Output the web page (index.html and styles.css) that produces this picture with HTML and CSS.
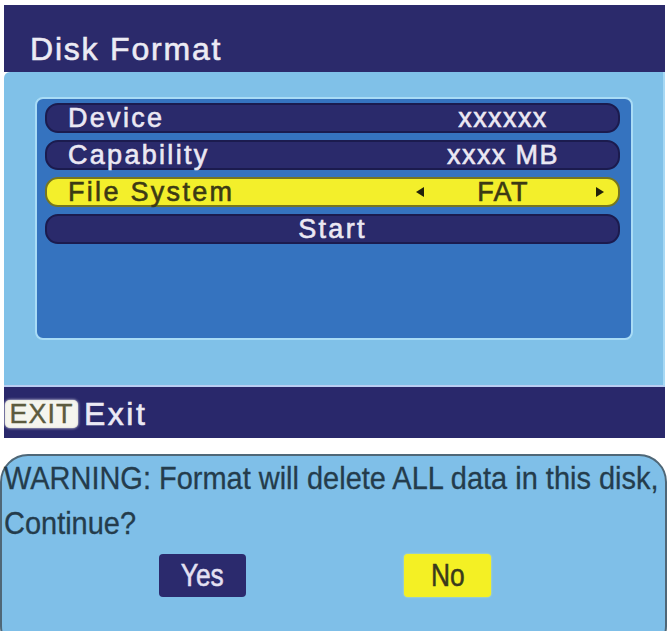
FILE: index.html
```html
<!DOCTYPE html>
<html>
<head>
<meta charset="utf-8">
<link rel="stylesheet" href="styles.css">
</head>
<body>
<div class="screen">
  <div class="header"><span class="title">Disk Format</span></div>
  <div class="body">
    <div class="panel">
      <div class="row">
        <span class="label">Device</span>
        <span class="value"><span></span><span class="val">xxxxxx</span><span></span></span>
      </div>
      <div class="row">
        <span class="label">Capability</span>
        <span class="value"><span></span><span class="val">xxxx MB</span><span></span></span>
      </div>
      <div class="row sel">
        <span class="label">File System</span>
        <span class="value">
          <svg class="arrow" viewBox="0 0 8 10" width="8" height="10"><polygon points="8,0 8,10 0,5"/></svg>
          <span class="val">FAT</span>
          <svg class="arrow" viewBox="0 0 8 10" width="8" height="10"><polygon points="0,0 0,10 8,5"/></svg>
        </span>
      </div>
      <div class="row center"><span class="label">Start</span></div>
    </div>
  </div>
  <div class="footer">
    <span class="exit-key">EXIT</span>
    <span class="exit-label">Exit</span>
  </div>
</div>
<div class="dialog">
  <p class="warn">WARNING: Format will delete ALL data in this disk,</p>
  <p class="warn second">Continue?</p>
  <div class="buttons">
    <span class="btn yes"><span class="btn-text">Yes</span></span>
    <span class="btn no"><span class="btn-text">No</span></span>
  </div>
</div>
</body>
</html>
```

FILE: styles.css
```css
* { box-sizing: border-box; }
html, body { margin: 0; padding: 0; }
body {
  background: #ffffff;
  font-family: "Liberation Sans", Arial, sans-serif;
  width: 667px;
  height: 631px;
  overflow: hidden;
}
.screen {
  margin: 5px 2px 0 4px;
}
.header {
  height: 67px;
  background: #2b2a6b;
  padding: 28px 0 0 26px;
}
.title {
  display: block;
  font-size: 32px;
  line-height: 32px;
  letter-spacing: 1.8px;
  color: #ecebf4;
  -webkit-text-stroke: 0.6px #ecebf4;
}
.body {
  height: 315px;
  background: #80c1e8;
  border-top-left-radius: 6px;
  border-bottom: 2px solid #b9cdf2;
  border-right: 2px solid #a6d8f4;
  padding: 25px 30px 0 31px;
}
.panel {
  height: 243px;
  background: #3573bf;
  border: 2px solid #a9dcf6;
  border-radius: 8px;
  padding: 4px 11px 0 8px;
  display: flex;
  flex-direction: column;
  gap: 7px;
}
.row {
  height: 30px;
  background: #2a2a6b;
  border: 2px solid #1b1b4e;
  border-radius: 13px;
  display: grid;
  grid-template-columns: 1fr 190px;
  padding: 0 13px 0 21px;
  color: #ebe8f3;
  font-size: 27px;
  line-height: 26px;
}
.label {
  letter-spacing: 2.3px;
  -webkit-text-stroke: 0.6px currentColor;
  white-space: nowrap;
}
.value {
  display: grid;
  grid-template-columns: 10px 1fr 10px;
  align-items: center;
  justify-items: center;
}
.val {
  margin-right: 14px;
  letter-spacing: 1.4px;
  -webkit-text-stroke: 0.6px currentColor;
  white-space: nowrap;
}
.row.sel {
  background: #f3ef2b;
  border-color: #77761f;
  color: #3c3a14;
}
.arrow { fill: #22220a; }
.row.center {
  grid-template-columns: 1fr;
  justify-items: center;
  padding: 0;
}
.footer {
  height: 51px;
  background: #29286b;
  display: flex;
  align-items: center;
  padding: 2px 0 0 1px;
}
.exit-key {
  width: 73px;
  height: 28px;
  background: #f5f5ee;
  border-radius: 5px;
  box-shadow: 0 0 3px #ffffff, inset 0 0 2px #d8d8c8;
  color: #5c5b3e;
  font-size: 27px;
  line-height: 28px;
  letter-spacing: 1px;
  text-align: center;
  -webkit-text-stroke: 0.4px #5c5b3e;
}
.exit-label {
  margin-left: 6px;
  color: #ebe9f5;
  font-size: 32px;
  line-height: 32px;
  letter-spacing: 2.5px;
  -webkit-text-stroke: 0.6px #ebe9f5;
}
.dialog {
  margin-top: 16px;
  height: 200px;
  background: #7fbfe8;
  border: 2px solid #4f6777;
  border-radius: 28px;
  padding: 5px 0 0 2px;
}
.warn {
  margin: 0;
  font-size: 32px;
  line-height: 34px;
  color: #243c4c;
  white-space: nowrap;
  transform: scaleX(0.905);
  transform-origin: left center;
  -webkit-text-stroke: 0.3px #243c4c;
}
.warn.second { margin-top: 11px; }
.buttons {
  margin-top: 14px;
  display: flex;
  padding-left: 155px;
  gap: 158px;
}
.btn {
  width: 87px;
  height: 43px;
  border-radius: 4px;
  display: flex;
  align-items: center;
  justify-content: center;
  font-size: 31px;
}
.btn-text {
  display: inline-block;
  transform: scaleX(0.85);
}
.btn.yes {
  background: #2b2a6d;
  color: #e4e0f2;
  -webkit-text-stroke: 0.5px #e4e0f2;
}
.btn.no {
  background: #f4f024;
  color: #3a3a1c;
  box-shadow: 0 0 2px #e6f07a;
  -webkit-text-stroke: 0.5px #3a3a1c;
}
```
